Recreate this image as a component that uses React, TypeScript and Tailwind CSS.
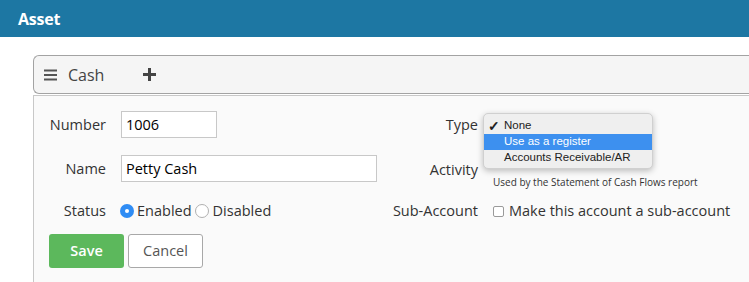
import React from "react";

export default function App() {
  const font = { fontFamily: '"Open Sans", "Liberation Sans", sans-serif' };
  return (
    <div className="w-[749px] h-[282px] overflow-hidden bg-white text-[#333]" style={font}>
      <div className="h-[37px] bg-[#1d77a3] flex items-center pl-[18px]">
        <span className="text-white font-bold text-[16px] tracking-[-0.2px]">Asset</span>
      </div>
      <div className="pl-[33px] pt-[18px]">
        <div className="h-[39px] bg-[#f5f5f5] border border-[#a3a3a3] border-r-0 rounded-l-[6px] flex items-center pl-[10px]">
          <svg width="13" height="12" viewBox="0 0 13 12" className="mt-[1px]">
            <rect x="0" y="0.5" width="13" height="2" fill="#555" />
            <rect x="0" y="5" width="13" height="2" fill="#555" />
            <rect x="0" y="9.5" width="13" height="2" fill="#555" />
          </svg>
          <span className="ml-[11px] text-[16px] text-[#444]">Cash</span>
          <svg width="13" height="13" viewBox="0 0 13 13" className="ml-[39px]">
            <rect x="5" y="0" width="3" height="13" fill="#444" />
            <rect x="0" y="5" width="13" height="3" fill="#444" />
          </svg>
        </div>
        <div className="relative h-[200px] bg-[#fafafa] border-l border-t border-[#c8c8c8] mt-[1px] pl-[15px] pt-[15px] text-[14.5px]">
          {/* Row 1 */}
          <div className="flex items-center h-[27px]">
            <div className="w-[330px] flex items-center">
              <div className="w-[57px] text-right whitespace-nowrap">Number</div>
              <input
                readOnly
                value="1006"
                className="ml-[15px] w-[96px] h-[27px] border border-[#c8c8c8] bg-white px-[4px] text-[14.5px] text-black outline-none"
                style={font}
              />
            </div>
            <div className="flex items-center">
              <div className="w-[99px] text-right">Type</div>
            </div>
          </div>
          {/* Row 2 */}
          <div className="flex items-center h-[27px] mt-[17px]">
            <div className="w-[330px] flex items-center">
              <div className="w-[57px] text-right">Name</div>
              <input
                readOnly
                value="Petty Cash"
                className="ml-[15px] w-[256px] h-[27px] border border-[#c8c8c8] bg-white px-[4px] text-[14.5px] text-black outline-none"
                style={font}
              />
            </div>
            <div className="flex items-start h-[27px]">
              <div className="w-[99px] text-right leading-[27px] mt-[1px]">Activity</div>
              <div className="ml-[15px] pt-[20px] text-[10px] leading-[14px] text-[#333] whitespace-nowrap">
                Used by the Statement of Cash Flows report
              </div>
            </div>
          </div>
          {/* Row 3 */}
          <div className="flex items-center h-[27px] mt-[15px]">
            <div className="w-[330px] flex items-center">
              <div className="w-[57px] text-right">Status</div>
              <div className="ml-[14px] flex items-center">
                <span className="w-[14px] h-[14px] rounded-full bg-[#2f8cf4] flex items-center justify-center">
                  <span className="w-[4px] h-[4px] rounded-full bg-white" />
                </span>
                <span className="ml-[3px]">Enabled</span>
                <span className="ml-[3px] w-[14px] h-[14px] rounded-full bg-white border border-[#b0b0b0]" />
                <span className="ml-[4px]">Disabled</span>
              </div>
            </div>
            <div className="flex items-center">
              <div className="w-[99px] text-right whitespace-nowrap">Sub-Account</div>
              <span className="ml-[15px] w-[11px] h-[11px] rounded-[2px] bg-white border border-[#9a9a9a] mt-[2px]" />
              <span className="ml-[5px] whitespace-nowrap">Make this account a sub-account</span>
            </div>
          </div>
          {/* Buttons */}
          <div className="flex items-center mt-[10px]">
            <button
              className="w-[75px] h-[34px] rounded-[3px] bg-[#5cb85c] text-white text-[14.5px] font-semibold"
              style={font}
            >
              Save
            </button>
            <button
              className="ml-[4px] w-[75px] h-[34px] rounded-[3px] bg-white border border-[#a8a8a8] text-[#555] text-[14.5px]"
              style={font}
            >
              Cancel
            </button>
          </div>

          {/* Native popup menu overlay */}
          <div
            className="absolute left-[449px] top-[17px] w-[170px] h-[56px] rounded-[5px] bg-[#efefef] border border-[#d0d0d0] shadow-[0_2px_6px_rgba(0,0,0,0.25)] py-[4px] text-[11.5px] text-[#222]"
            style={{ fontFamily: '"Liberation Sans", Arial, sans-serif' }}
          >
            <div className="h-[16px] flex items-center">
              <span className="w-[20px] pl-[4px] text-[14px] font-bold leading-none">✓</span>
              <span>None</span>
            </div>
            <div className="h-[16px] flex items-center bg-[#3d90ef] text-white">
              <span className="w-[20px]" />
              <span>Use as a register</span>
            </div>
            <div className="h-[16px] flex items-center">
              <span className="w-[20px]" />
              <span>Accounts Receivable/AR</span>
            </div>
          </div>
        </div>
      </div>
    </div>
  );
}
